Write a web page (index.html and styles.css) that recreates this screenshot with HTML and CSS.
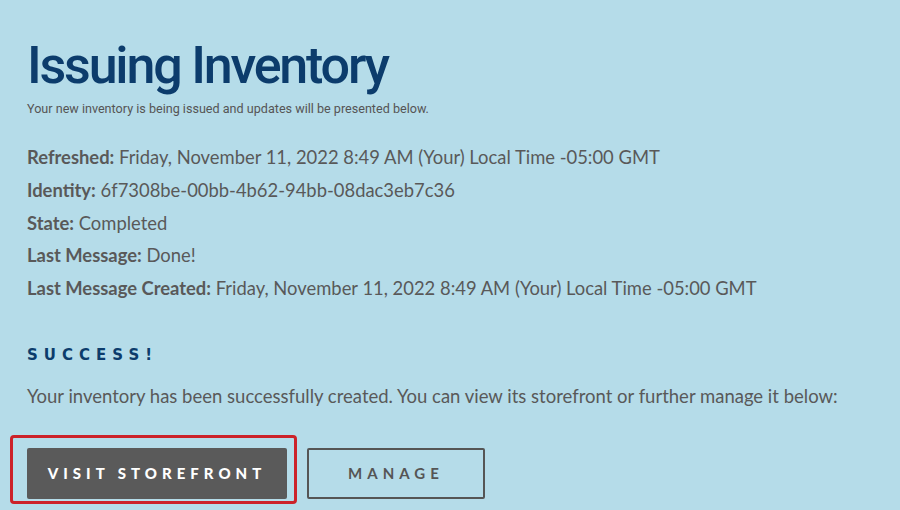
FILE: index.html
```html
<!DOCTYPE html>
<html>
<head>
<meta charset="utf-8">
<link rel="stylesheet" href="styles.css">
</head>
<body>
<main class="page">
  <h1 class="title">Issuing Inventory</h1>
  <p class="subtitle">Your new inventory is being issued and updates will be presented below.</p>
  <ul class="info">
    <li><b>Refreshed:</b> Friday, November 11, 2022 8:49 AM (Your) Local Time -05:00 GMT</li>
    <li><b>Identity:</b> 6f7308be-00bb-4b62-94bb-08dac3eb7c36</li>
    <li><b>State:</b> Completed</li>
    <li><b>Last Message:</b> Done!</li>
    <li><b>Last Message Created:</b> Friday, November 11, 2022 8:49 AM (Your) Local Time -05:00 GMT</li>
  </ul>
  <h2 class="success">SUCCESS!</h2>
  <p class="message">Your inventory has been successfully created. You can view its storefront or further manage it below:</p>
  <div class="actions">
    <div class="highlight-wrap">
      <a class="btn btn-primary">VISIT STOREFRONT</a>
      <span class="highlight"></span>
    </div>
    <a class="btn btn-outline">MANAGE</a>
  </div>
</main>
</body>
</html>
```
FILE: styles.css
```css
html, body {
  margin: 0;
  padding: 0;
  background: #b5dce9;
  height: 100%;
  overflow: hidden;
}
.page {
  padding: 34px 0 0 27px;
  font-family: Lato, "Open Sans", sans-serif;
  color: #595959;
}
.title {
  margin: 0;
  font-family: Roboto, "DejaVu Sans", sans-serif;
  font-weight: 500;
  font-size: 52px;
  line-height: 64px;
  letter-spacing: -2.2px;
  color: #0c3c6c;
}
.subtitle {
  margin: 3px 0 0 0;
  font-family: Roboto, sans-serif;
  font-size: 12.6px;
  line-height: 15px;
  color: #555;
}
.info {
  list-style: none;
  margin: 25px 0 0 0;
  padding: 0;
  font-size: 18.4px;
  line-height: 32.8px;
}
.info b {
  font-weight: 700;
}
.success {
  margin: 40px 0 0 0;
  font-family: "DejaVu Sans", sans-serif;
  font-weight: 700;
  font-size: 15px;
  line-height: 20px;
  letter-spacing: 6px;
  color: #0c3c6c;
}
.message {
  margin: 18px 0 0 0;
  font-size: 18.5px;
  line-height: 26px;
}
.actions {
  display: flex;
  gap: 20px;
  margin-top: 39px;
}
.highlight-wrap {
  position: relative;
}
.btn {
  display: flex;
  align-items: center;
  justify-content: center;
  box-sizing: border-box;
  height: 51px;
  font-weight: 900;
  font-size: 15px;
  letter-spacing: 5px;
  border-radius: 2px;
}
.btn-primary {
  width: 260px;
  background: #5a5a5a;
  color: #fff;
}
.btn-outline {
  width: 178px;
  border: 2px solid #555;
  color: #555;
  font-weight: 700;
}
.highlight {
  position: absolute;
  left: -17px;
  top: -13px;
  width: 287px;
  height: 69px;
  box-sizing: border-box;
  border: 3px solid #cc2229;
  border-radius: 4px;
}
```
